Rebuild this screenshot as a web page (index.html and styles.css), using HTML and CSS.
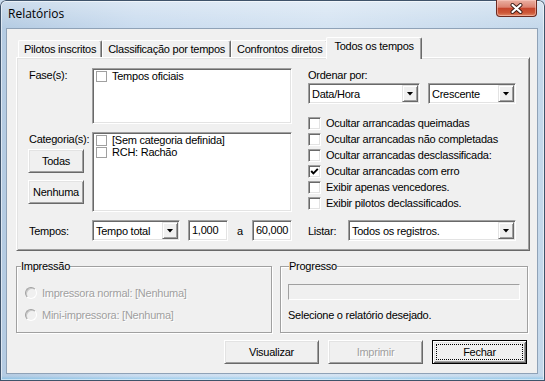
FILE: index.html
```html
<!DOCTYPE html>
<html lang="pt">
<head>
    <meta charset="UTF-8">
    <title>Relatórios</title>
    <link rel="stylesheet" href="styles.css">
</head>
<body>
    <div class="window">
        <div class="titlebar">
            <span class="title">Relatórios</span>
            <div class="close">
                <svg width="15" height="11" viewBox="0 0 15 11">
                    <path d="M3.5 2 L11.5 9 M11.5 2 L3.5 9" stroke="#3c1c16" stroke-width="4" stroke-linecap="round" fill="none"/>
                    <path d="M3.5 2 L11.5 9 M11.5 2 L3.5 9" stroke="#fff" stroke-width="2.2" stroke-linecap="round" fill="none"/>
                </svg>
            </div>
        </div>

        <div class="client">
            <div class="tabs">
                <div class="tab">Pilotos inscritos</div>
                <div class="tab">Classificação por tempos</div>
                <div class="tab">Confrontos diretos</div>
                <div class="tab active">Todos os tempos</div>
            </div>

            <div class="panel">
                <div class="panel-top">
                    <div class="filters">
                        <div class="label">Fase(s):</div>
                        <div class="list">
                            <div class="item"><span class="box"></span>Tempos oficiais</div>
                        </div>
                        <div class="label-col">
                            <div class="label">Categoria(s):</div>
                            <button class="btn small first">Todas</button>
                            <button class="btn small">Nenhuma</button>
                        </div>
                        <div class="list">
                            <div class="item"><span class="box"></span>[Sem categoria definida]</div>
                            <div class="item"><span class="box"></span>RCH: Rachão</div>
                        </div>
                    </div>

                    <div class="options">
                        <div class="label">Ordenar por:</div>
                        <div class="combo-row">
                            <div class="combo w-order"><span>Data/Hora</span><span class="arrow"></span></div>
                            <div class="combo w-dir"><span>Crescente</span><span class="arrow"></span></div>
                        </div>
                        <ul class="checks">
                            <li><span class="check"></span>Ocultar arrancadas queimadas</li>
                            <li><span class="check"></span>Ocultar arrancadas não completadas</li>
                            <li><span class="check"></span>Ocultar arrancadas desclassificada:</li>
                            <li><span class="check"><svg width="9" height="9" viewBox="0 0 9 9"><path d="M1.2 4 L3.4 6.4 L7.8 1.8" stroke="#000" stroke-width="1.9" fill="none"/></svg></span>Ocultar arrancadas com erro</li>
                            <li><span class="check"></span>Exibir apenas vencedores.</li>
                            <li><span class="check"></span>Exibir pilotos declassificados.</li>
                        </ul>
                    </div>
                </div>

                <div class="panel-bottom">
                    <div class="tempos">
                        <div class="label-inline w-tempos">Tempos:</div>
                        <div class="combo w-tempo"><span>Tempo total</span><span class="arrow"></span></div>
                        <div class="edit">1,000</div>
                        <div class="sep">a</div>
                        <div class="edit">60,000</div>
                    </div>
                    <div class="listar">
                        <div class="label-inline w-listar">Listar:</div>
                        <div class="combo w-list"><span>Todos os registros.</span><span class="arrow"></span></div>
                    </div>
                </div>
            </div>

            <div class="groups">
                <fieldset class="group impressao">
                    <legend>Impressão</legend>
                    <div class="radio-row first"><span class="radio"></span>Impressora normal: [Nenhuma]</div>
                    <div class="radio-row"><span class="radio"></span>Mini-impressora: [Nenhuma]</div>
                </fieldset>
                <fieldset class="group progresso">
                    <legend>Progresso</legend>
                    <div class="progress"></div>
                    <div class="status">Selecione o relatório desejado.</div>
                </fieldset>
            </div>

            <div class="actions">
                <button class="btn wide">Visualizar</button>
                <button class="btn wide disabled">Imprimir</button>
                <button class="btn wide default"><span class="focus">Fechar</span></button>
            </div>
        </div>
    </div>
</body>
</html>
```

FILE: styles.css
```css
* {
    box-sizing: border-box;
}
body {
    margin: 0;
    font-family: "Liberation Sans", Arial, sans-serif;
    font-size: 11px;
    letter-spacing: -0.25px;
    color: #000;
    background: #c9dbed;
}

/* window frame */
.window {
    width: 545px;
    height: 381px;
    display: flex;
    flex-direction: column;
    border-radius: 6px 6px 0 0;
    overflow: hidden;
    background:
        linear-gradient(0deg, rgba(70, 175, 230, 0.55) 0, rgba(70, 175, 230, 0) 5px),
        linear-gradient(180deg, rgba(255, 255, 255, 0.35), rgba(255, 255, 255, 0) 28px),
        linear-gradient(90deg, #b4cbe2 0%, #cadcef 25%, #d4e3f2 60%, #c4d8eb 100%);
    box-shadow: inset 0 0 0 1px #3f536a, inset 0 0 0 2px rgba(255, 255, 255, 0.55);
}
.titlebar {
    height: 29px;
    display: flex;
    align-items: flex-start;
    padding: 0 8px;
}
.title {
    font-family: "Open Sans", "Liberation Sans", sans-serif;
    font-size: 12px;
    letter-spacing: 0;
    line-height: 28px;
}
.close {
    margin-left: auto;
    width: 41px;
    height: 17px;
    display: flex;
    align-items: center;
    justify-content: center;
    border: 1px solid #6b2a20;
    border-top: none;
    border-radius: 0 0 4px 4px;
    background: linear-gradient(180deg, #eab0a2 0%, #dc8270 45%, #c5452c 52%, #cd5838 80%, #e18a68 100%);
    box-shadow: inset 0 0 0 1px rgba(255, 210, 200, 0.5);
}

/* client area */
.client {
    margin: 0 8px 8px 7px;
    height: 344px;
    padding: 0 7px 0 9px;
    background: #f0f0f0;
    box-shadow: 0 0 0 1px #8fa2b7;
    display: flex;
    flex-direction: column;
}

/* tabs */
.tabs {
    height: 28px;
    display: flex;
    align-items: flex-end;
    padding-left: 2px;
}
.tab {
    height: 17px;
    line-height: 16px;
    padding: 0 5px;
    white-space: nowrap;
    background: #f0f0f0;
    border-top: 1px solid #fff;
    border-left: 1px solid #fff;
    border-right: 1px solid #696969;
    border-radius: 2px 2px 0 0;
    box-shadow: inset -1px 0 0 #a0a0a0;
}
.tab.active {
    position: relative;
    z-index: 1;
    height: 22px;
    line-height: 17px;
    margin: 0 -2px -2px -2px;
    padding: 0 7px;
}

.panel {
    height: 194px;
    padding: 10px 13px 9px 12px;
    background: #f0f0f0;
    border: 1px solid;
    border-color: #fff #696969 #696969 #fff;
    box-shadow: inset 1px 1px 0 #e3e3e3, inset -1px -1px 0 #a0a0a0;
}
.panel-top {
    display: flex;
    gap: 16px;
    height: 144px;
}
.filters {
    display: grid;
    grid-template-columns: 63px 200px;
    grid-template-rows: 56px 80px;
    row-gap: 8px;
}
.label {
    line-height: 13px;
    margin-top: 1px;
}
.label-col {
    display: flex;
    flex-direction: column;
    align-items: flex-start;
}

/* sunken fields */
.list,
.combo,
.edit,
.check {
    background: #fff;
    border: 1px solid;
    border-color: #a0a0a0 #fff #fff #a0a0a0;
    box-shadow: inset 1px 1px 0 #696969, inset -1px -1px 0 #e3e3e3;
}
.list {
    padding: 1px 2px 1px 3px;
}
.item {
    height: 12px;
    display: flex;
    align-items: center;
    gap: 5px;
    white-space: nowrap;
}
.box {
    width: 11px;
    height: 11px;
    border: 1px solid #a0a0a0;
    background: #fff;
}

/* buttons */
.btn {
    font: inherit;
    letter-spacing: inherit;
    color: #000;
    padding: 0;
    background: #f0f0f0;
    border: 1px solid;
    border-color: #fff #696969 #696969 #fff;
    box-shadow: inset 1px 1px 0 #e3e3e3, inset -1px -1px 0 #a0a0a0;
}
.btn.small {
    width: 56px;
    height: 24px;
    margin: 7px 0 0 -1px;
}
.btn.small.first {
    margin-top: 3px;
}
.btn.wide {
    width: 95px;
    height: 24px;
}
.btn.disabled {
    color: #a0a0a0;
    text-shadow: 1px 1px 0 #fff;
}
.btn.default {
    border-color: #000;
    padding: 3px;
    display: flex;
    box-shadow: inset 1px 1px 0 #fff, inset -1px -1px 0 #696969, inset 2px 2px 0 #e3e3e3, inset -2px -2px 0 #a0a0a0;
}
.focus {
    flex: 1;
    display: flex;
    align-items: center;
    justify-content: center;
    border: 1px dotted #000;
}

/* combos */
.options {
    width: 208px;
}
.combo-row {
    display: flex;
    gap: 8px;
    margin-top: 1px;
}
.combo {
    height: 21px;
    padding: 1px 1px 1px 3px;
    display: flex;
    align-items: center;
    justify-content: space-between;
    white-space: nowrap;
}
.arrow {
    width: 16px;
    height: 17px;
    display: flex;
    align-items: center;
    justify-content: center;
    background: #f0f0f0;
    border: 1px solid;
    border-color: #e3e3e3 #696969 #696969 #e3e3e3;
    box-shadow: inset 1px 1px 0 #fff, inset -1px -1px 0 #a0a0a0;
}
.arrow::after {
    content: "";
    width: 7px;
    height: 4px;
    background: #000;
    clip-path: polygon(0 0, 100% 0, 50% 100%);
}
.w-order { width: 112px; }
.w-dir { width: 88px; }
.w-tempo { width: 88px; }
.w-list { width: 168px; }

/* checkboxes */
.checks {
    list-style: none;
    margin: 11px 0 0;
    padding: 0;
}
.checks li {
    height: 16px;
    display: flex;
    align-items: center;
    gap: 5px;
    white-space: nowrap;
}
.check {
    width: 13px;
    height: 13px;
    display: flex;
    align-items: center;
    justify-content: center;
}

/* bottom row of the panel */
.panel-bottom {
    display: flex;
    gap: 16px;
    margin-top: 8px;
    height: 21px;
}
.tempos {
    width: 263px;
    display: flex;
    align-items: center;
}
.listar {
    width: 208px;
    display: flex;
    align-items: center;
}
.w-tempos { width: 63px; }
.w-listar { width: 40px; }
.edit {
    width: 40px;
    height: 21px;
    margin-left: 8px;
    padding-left: 3px;
    line-height: 19px;
}
.sep {
    width: 24px;
    text-align: center;
}
.sep + .edit {
    margin-left: 0;
}

/* group boxes */
.groups {
    display: flex;
    gap: 8px;
    margin-top: 9px;
}
.group {
    margin: 0;
    padding: 0;
    height: 73px;
    min-width: 0;
    border: 1px solid #a0a0a0;
    box-shadow: inset 1px 1px 0 #fff, 1px 1px 0 #fff;
}
.group legend {
    padding: 0;
    line-height: 13px;
    background: #f0f0f0;
}
.impressao {
    width: 256px;
    padding-left: 8px;
}
.impressao legend {
    margin-left: -4px;
}
.progresso {
    width: 248px;
    padding-left: 7px;
}
.progresso legend {
    margin-left: 1px;
}
.radio-row {
    height: 16px;
    margin-top: 6px;
    display: flex;
    align-items: center;
    gap: 5px;
    color: #a0a0a0;
    text-shadow: 1px 1px 0 #fff;
}
.radio-row.first {
    margin-top: 12px;
}
.radio {
    width: 12px;
    height: 12px;
    border-radius: 50%;
    border: 1px solid;
    border-color: #a0a0a0 #fff #fff #a0a0a0;
    box-shadow: inset 1px 1px 0 #c8c8c8;
    background: #f0f0f0;
}
.progress {
    width: 232px;
    height: 16px;
    margin-top: 11px;
    border: 1px solid;
    border-color: #a0a0a0 #fff #fff #a0a0a0;
    background: #f0f0f0;
}
.status {
    line-height: 13px;
    margin-top: 9px;
}

.actions {
    display: flex;
    justify-content: flex-end;
    gap: 9px;
    margin-top: 7px;
    padding-right: 3px;
}
```
